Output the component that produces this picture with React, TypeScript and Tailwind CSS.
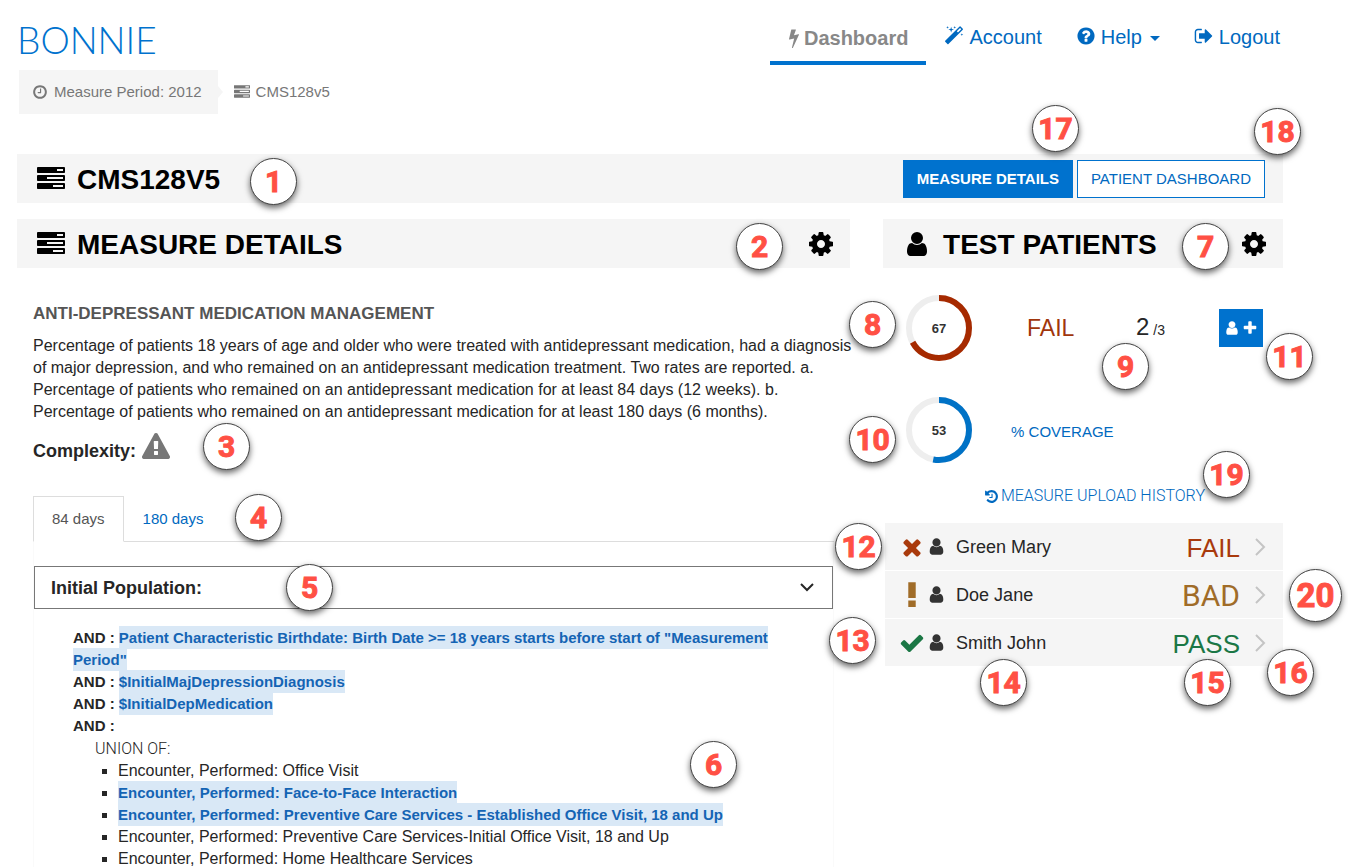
import React, { useState } from "react";

const paths = {
  tasks:
    "M1024 1408h640v-128h-640v128zm-384-512h1024v-128h-1024v128zm640-512h384v-128h-384v128zm512 832v256q0 26-19 45t-45 19h-1664q-26 0-45-19t-19-45v-256q0-26 19-45t45-19h1664q26 0 45 19t19 45zm0-512v256q0 26-19 45t-45 19h-1664q-26 0-45-19t-19-45v-256q0-26 19-45t45-19h1664q26 0 45 19t19 45zm0-512v256q0 26-19 45t-45 19h-1664q-26 0-45-19t-19-45v-256q0-26 19-45t45-19h1664q26 0 45 19t19 45z",
  cog: "M1152 896q0-106-75-181t-181-75-181 75-75 181 75 181 181 75 181-75 75-181zm512-109v222q0 12-8 23t-20 13l-185 28q-19 54-39 91 35 50 107 138 10 12 10 25t-9 23q-27 37-99 108t-94 71q-12 0-26-9l-138-108q-44 23-91 38-16 136-29 186-7 28-36 28h-222q-14 0-24.5-8.5t-11.5-21.5l-28-184q-49-16-90-37l-141 107q-10 9-25 9-14 0-25-11-126-114-165-168-7-10-7-23 0-12 8-23 15-21 51-66.5t54-70.5q-27-50-41-99l-183-27q-13-2-21-12.5t-8-23.5v-222q0-12 8-23t19-13l186-28q14-46 39-92-40-57-107-138-10-12-10-24 0-10 9-23 26-36 98.5-107.5t94.5-71.5q13 0 26 10l138 107q44-23 91-38 16-136 29-186 7-28 36-28h222q14 0 24.5 8.5t11.5 21.5l28 184q49 16 90 37l142-107q9-9 24-9 13 0 25 10 129 119 165 170 7 8 7 22 0 12-8 23-15 21-51 66.5t-54 70.5q26 50 41 98l183 28q13 2 21 12.5t8 23.5z",
  user: "M1536 1399q0 109-62.5 187t-150.5 78h-854q-88 0-150.5-78t-62.5-187q0-85 8.5-160.5t31.5-152 58.5-131 94-89 134.5-34.5q131 128 313 128t313-128q76 0 134.5 34.5t94 89 58.5 131 31.5 152 8.5 160.5zm-256-887q0 159-112.5 271.5t-271.5 112.5-271.5-112.5-112.5-271.5 112.5-271.5 271.5-112.5 271.5 112.5 112.5 271.5z",
  clock:
    "M1024 544v448q0 14-9 23t-23 9h-320q-14 0-23-9t-9-23v-64q0-14 9-23t23-9h224v-352q0-14 9-23t23-9h64q14 0 23 9t9 23zm416 352q0-148-73-273t-198-198-273-73-273 73-198 198-73 273 73 273 198 198 273 73 273-73 198-198 73-273zm224 0q0 209-103 385.5t-279.5 279.5-385.5 103-385.5-103-279.5-279.5-103-385.5 103-385.5 279.5-279.5 385.5-103 385.5 103 279.5 279.5 103 385.5z",
  bolt: "M1333 566q18 20 7 44l-540 1157q-13 25-42 25-4 0-14-2-17-5-25.5-19t-4.5-30l197-808-406 101q-4 1-12 1-18 0-31-11-18-15-13-39l201-825q4-14 16-23t28-9h328q19 0 32 12.5t13 29.5q0 8-5 18l-171 463 396-98q8-2 12-2 19 0 34 15z",
  magic:
    "M1254 581l293-293-107-107-293 293zm447-293q0 27-18 45l-1286 1286q-18 18-45 18t-45-18l-198-198q-18-18-18-45t18-45l1286-1286q18-18 45-18t45 18l198 198q18 18 18 45zm-1351-190l98 30-98 30-30 98-30-98-98-30 98-30 30-98zm350 162l196 60-196 60-60 196-60-196-196-60 196-60 60-196zm930 478l98 30-98 30-30 98-30-98-98-30 98-30 30-98zm-640-640l98 30-98 30-30 98-30-98-98-30 98-30 30-98z",
  question:
    "M1024 1376v-192q0-14-9-23t-23-9h-192q-14 0-23 9t-9 23v192q0 14 9 23t23 9h192q14 0 23-9t9-23zm256-672q0-88-55.5-163t-138.5-116-170-41q-243 0-371 213-15 24 8 42l132 100q7 6 19 6 16 0 25-12 53-68 86-92 34-24 86-24 48 0 85.5 26t37.5 59q0 38-20 61t-68 45q-63 28-115.5 86.5t-52.5 125.5v36q0 14 9 23t23 9h192q14 0 23-9t9-23q0-19 21.5-49.5t54.5-49.5q32-18 49-28.5t46-35 44.5-48 28-60.5 12.5-81zm384 192q0 209-103 385.5t-279.5 279.5-385.5 103-385.5-103-279.5-279.5-103-385.5 103-385.5 279.5-279.5 385.5-103 385.5 103 279.5 279.5 103 385.5z",
  signOut:
    "M704 1440q0 4 1 20t.5 26.5-3 23.5-10 19.5-20.5 6.5h-320q-119 0-203.5-84.5t-84.5-203.5v-704q0-119 84.5-203.5t203.5-84.5h320q13 0 22.5 9.5t9.5 22.5q0 4 1 20t.5 26.5-3 23.5-10 19.5-20.5 6.5h-320q-66 0-113 47t-47 113v704q0 66 47 113t113 47h312l11.5 1 11.5 3 8 5.5 7 9 2 13.5zm928-544q0 26-19 45l-544 544q-19 19-45 19t-45-19-19-45v-288h-448q-26 0-45-19t-19-45v-384q0-26 19-45t45-19h448v-288q0-26 19-45t45-19 45 19l544 544q19 19 19 45z",
  history:
    "M1664 896q0 156-61 298t-164 245-245 164-298 61q-172 0-327-72.5t-264-204.5q-7-10-6.5-22.5t8.5-20.5l137-138q10-9 25-9 16 2 23 12 73 95 179 147t225 52q104 0 198.5-40.5t163.5-109.5 109.5-163.5 40.5-198.5-40.5-198.5-109.5-163.5-163.5-109.5-198.5-40.5q-98 0-188 35.5t-160 101.5l137 138q31 30 14 69-17 40-59 40h-448q-26 0-45-19t-19-45v-448q0-42 40-59 39-17 69 14l130 129q107-101 244.5-156.5t284.5-55.5q156 0 298 61t245 164 164 245 61 298zm-640-288v448q0 14-9 23t-23 9h-320q-14 0-23-9t-9-23v-64q0-14 9-23t23-9h224v-352q0-14 9-23t23-9h64q14 0 23 9t9 23z",
  warning:
    "M1024 1375v-190q0-14-9.5-23.5t-22.5-9.5h-192q-13 0-22.5 9.5t-9.5 23.5v190q0 14 9.5 23.5t22.5 9.5h192q13 0 22.5-9.5t9.5-23.5zm-2-374l18-459q0-12-10-19-13-11-24-11h-220q-11 0-24 11-10 7-10 21l17 457q0 10 10 16.5t24 6.5h185q14 0 23.5-6.5t10.5-16.5zm-14-934l768 1408q35 63-2 126-17 29-46.5 46t-63.5 17h-1536q-34 0-63.5-17t-46.5-46q-37-63-2-126l768-1408q17-31 47-49t65-18 65 18 47 49z",
  times:
    "M1490 1322q0 40-28 68l-136 136q-28 28-68 28t-68-28l-294-294-294 294q-28 28-68 28t-68-28l-136-136q-28-28-28-68t28-68l294-294-294-294q-28-28-28-68t28-68l136-136q28-28 68-28t68 28l294 294 294-294q28-28 68-28t68 28l136 136q28 28 28 68t-28 68l-294 294 294 294q28 28 28 68z",
  check:
    "M1671 566q0 40-28 68l-724 724-136 136q-28 28-68 28t-68-28l-136-136-362-362q-28-28-28-68t28-68l136-136q28-28 68-28t68 28l294 295 656-657q28-28 68-28t68 28l136 136q28 28 28 68z",
  plus: "M1600 736v192q0 40-28 68t-68 28h-416v416q0 40-28 68t-68 28h-192q-40 0-68-28t-28-68v-416h-416q-40 0-68-28t-28-68v-192q0-40 28-68t68-28h416v-416q0-40 28-68t68-28h192q40 0 68 28t28 68v416h416q40 0 68 28t28 68z",
  bang: "M640 20h512v1080h-512zM640 1270h512v450h-512z",
};

type IconName = keyof typeof paths;

function Icon({ name, className }: { name: IconName; className: string }) {
  return (
    <svg viewBox="0 0 1792 1792" fill="currentColor" aria-hidden="true" className={`shrink-0 ${className}`}>
      <path d={paths[name]} />
    </svg>
  );
}

function Badge({ n, className, large = false }: { n: number; className: string; large?: boolean }) {
  return (
    <span
      className={`absolute z-10 flex items-center justify-center rounded-full border border-[#444] bg-white font-['Roboto',sans-serif] font-bold leading-none text-[#ff5044] shadow-[0_3px_6px_rgba(0,0,0,0.6)] [-webkit-text-stroke:1px_#ff5044] ${large ? "size-[53px] text-[33px]" : "size-[47px] text-[30px]"} ${className}`}
    >
      {n}
    </span>
  );
}

function Donut({ value, color }: { value: number; color: string }) {
  const r = 30;
  const c = 2 * Math.PI * r;
  return (
    <svg viewBox="0 0 66 66" className="size-[66px] shrink-0" role="img" aria-label={`${value} percent`}>
      <circle cx="33" cy="33" r={r} fill="none" stroke="#eeeeee" strokeWidth="6" />
      <circle
        cx="33"
        cy="33"
        r={r}
        fill="none"
        stroke={color}
        strokeWidth="6"
        strokeDasharray={`${(c * value) / 100} ${c}`}
        transform="rotate(-90 33 33)"
      />
      <text x="33" y="38" textAnchor="middle" fontSize="13" fontWeight="bold" fill="#333">
        {value}
      </text>
    </svg>
  );
}

function PanelTitle({ icon, title, children }: { icon: IconName; title: string; children?: React.ReactNode }) {
  return (
    <div className="relative flex h-[49px] items-center bg-[#f5f5f5] px-5 text-black">
      <Icon name={icon} className="mr-3 size-7" />
      <h2 className="pt-[2px] text-[28px] font-bold leading-none">{title}</h2>
      <button type="button" aria-label={`${title} settings`} className="ml-auto mr-[-5px]">
        <Icon name="cog" className="size-7" />
      </button>
      {children}
    </div>
  );
}

function Hit({ children }: { children: React.ReactNode }) {
  return <span className="bg-[#d9e8f6] py-[3px] font-bold text-[#1464b4]">{children}</span>;
}

const encounters = [
  { text: "Encounter, Performed: Office Visit", hit: false },
  { text: "Encounter, Performed: Face-to-Face Interaction", hit: true },
  { text: "Encounter, Performed: Preventive Care Services - Established Office Visit, 18 and Up", hit: true },
  { text: "Encounter, Performed: Preventive Care Services-Initial Office Visit, 18 and Up", hit: false },
  { text: "Encounter, Performed: Home Healthcare Services", hit: false },
];

const patients: { name: string; status: string; icon: IconName; color: string; font: string }[] = [
  { name: "Green Mary", status: "FAIL", icon: "times", color: "text-[#a93a0c]", font: "text-[26px]" },
  { name: "Doe Jane", status: "BAD", icon: "bang", color: "text-[#a06c28]", font: "text-[30px] font-['Roboto',sans-serif]" },
  { name: "Smith John", status: "PASS", icon: "check", color: "text-[#1b7745]", font: "text-[26px]" },
];

export default function App() {
  const [tab, setTab] = useState(0);
  const [open, setOpen] = useState(true);
  return (
    <div className="h-screen overflow-hidden bg-white pl-[17px] pr-[65px] font-['Liberation_Sans',Arial,sans-serif] text-[15px] leading-[22px] text-[#262626]">
      <header className="flex h-[70px] items-start justify-between">
        <a href="#home" className="pt-5 font-['Lato','Roboto',sans-serif] text-[37px] font-light leading-10 text-[#0072ce]">
          BONNIE
        </a>
        <nav className="flex items-start text-[20px] leading-6 text-[#0069c0]">
          <a href="#dashboard" className="flex h-[65px] items-start border-b-4 border-[#0072ce] pl-[14px] pr-[18px] pt-[26px] font-bold text-[#888]">
            <Icon name="bolt" className="mt-[2px] size-5" />
            Dashboard
          </a>
          <a href="#account" className="ml-[18px] flex gap-[5px] pt-[25px]">
            <Icon name="magic" className="mt-px size-5" />
            Account
          </a>
          <button type="button" className="ml-[34px] flex gap-[5px] pt-[25px]">
            <Icon name="question" className="mt-px size-5" />
            Help
            <span className="ml-[3px] mt-[11px] border-x-[5px] border-t-[5px] border-x-transparent border-t-current" />
          </button>
          <a href="#logout" className="ml-[34px] mr-[3px] flex gap-[5px] pt-[25px]">
            <Icon name="signOut" className="mt-px size-5" />
            Logout
          </a>
        </nav>
      </header>

      <ol className="flex h-11 items-center pl-[2px] text-[#777]">
        <li className="relative flex h-full items-center gap-[6px] bg-[#f5f5f5] pl-[13px] pr-4">
          <Icon name="clock" className="size-4" />
          <span>Measure Period: 2012</span>
          <span className="absolute -right-[5px] top-4 border-y-[6px] border-l-[5px] border-y-transparent border-l-[#f5f5f5]" />
        </li>
        <li className="flex items-center gap-[6px] pl-4">
          <Icon name="tasks" className="size-4" />
          <span>CMS128v5</span>
        </li>
      </ol>

      <div className="relative mt-10 flex h-[49px] items-center bg-[#f5f5f5] px-5 text-black">
        <Icon name="tasks" className="mr-3 size-7" />
        <h1 className="pt-[2px] text-[28px] font-bold leading-none">CMS128V5</h1>
        <div className="ml-auto mr-[-2px] flex gap-1">
          <button type="button" className="h-[38px] border border-[#0072ce] bg-[#0072ce] px-[13px] font-bold text-white">
            MEASURE DETAILS
          </button>
          <button type="button" className="h-[38px] border border-[#0072ce] bg-white px-[13px] text-[#0069c0]">
            PATIENT DASHBOARD
          </button>
        </div>
        <Badge n={1} className="left-[233px] top-1" />
        <Badge n={17} className="-top-[49px] right-[204px]" />
        <Badge n={18} className="-right-[18px] -top-[46px]" />
      </div>

      <div className="mt-4 grid grid-cols-[minmax(0,25fr)_minmax(0,12fr)] gap-[33px]">
        <main>
          <PanelTitle icon="tasks" title="MEASURE DETAILS">
            <Badge n={2} className="right-[67px] top-1" />
          </PanelTitle>

          <div className="relative px-4 pt-[35px]">
            <h3 className="text-[17px] font-bold text-[#555]">ANTI-DEPRESSANT MEDICATION MANAGEMENT</h3>
            <p className="mt-[10px] whitespace-nowrap text-[16px] leading-[22px]">
              Percentage of patients 18 years of age and older who were treated with antidepressant medication, had a diagnosis
              <br />
              of major depression, and who remained on an antidepressant medication treatment. Two rates are reported. a.
              <br />
              Percentage of patients who remained on an antidepressant medication for at least 84 days (12 weeks). b.
              <br />
              Percentage of patients who remained on an antidepressant medication for at least 180 days (6 months).
            </p>
            <div className="mt-2 flex h-8 items-center gap-[6px] text-[18px] font-bold">
              <span className="pt-2">Complexity:</span>
              <Icon name="warning" className="size-7 text-[#777]" />
            </div>

            <div role="tablist" className="mt-[33px] flex h-[46px] border-b border-[#ddd]">
              {["84 days", "180 days"].map((label, i) => (
                <button
                  key={label}
                  type="button"
                  role="tab"
                  aria-selected={tab === i}
                  onClick={() => setTab(i)}
                  className={
                    tab === i
                      ? "-mb-px border border-[#ddd] border-b-white bg-white px-[18px] text-[#555]"
                      : "border border-transparent px-[18px] text-[#0069c0]"
                  }
                >
                  {label}
                </button>
              ))}
            </div>

            <div className="border-x border-[#fafafa] pt-6">
              <button
                type="button"
                aria-expanded={open}
                onClick={() => setOpen(!open)}
                className="flex h-[43px] w-full items-center justify-between border border-[#777] px-4 text-[18px] font-bold"
              >
                Initial Population:
                <svg viewBox="0 0 14 9" className="mr-[2px] h-[9px] w-[14px]" fill="none" stroke="#262626" strokeWidth="2">
                  <path d="M1 1l6 6 6-6" />
                </svg>
              </button>
              {open && (
                <div className="pl-[39px] pt-[18px]">
                  <div>
                    <b>AND : </b>
                    <Hit>
                      Patient Characteristic Birthdate: Birth Date &gt;= 18 years starts before start of "Measurement
                      <br />
                      Period"
                    </Hit>
                  </div>
                  <div>
                    <b>AND : </b>
                    <Hit>$InitialMajDepressionDiagnosis</Hit>
                  </div>
                  <div>
                    <b>AND : </b>
                    <Hit>$InitialDepMedication</Hit>
                  </div>
                  <div>
                    <b>AND :</b>
                  </div>
                  <div className="pl-[22px] pt-px font-['Roboto',sans-serif] text-[16px] font-light leading-[22px]">UNION OF:</div>
                  <ul className="pl-[29px]">
                    {encounters.map((e) => (
                      <li key={e.text} className="flex h-[22px] items-center whitespace-nowrap">
                        <span className="mr-[11px] size-[5px] shrink-0 bg-[#262626]" />
                        <div>{e.hit ? <Hit>{e.text}</Hit> : <span className="text-[16px] leading-[22px]">{e.text}</span>}</div>
                      </li>
                    ))}
                  </ul>
                </div>
              )}
            </div>

            <Badge n={3} className="left-[186px] top-[155px]" />
            <Badge n={4} className="left-[218px] top-[226px]" />
            <Badge n={5} className="left-[269px] top-[296px]" />
            <Badge n={6} className="right-[113px] top-[473px]" />
          </div>
        </main>

        <aside>
          <PanelTitle icon="user" title="TEST PATIENTS">
            <Badge n={7} className="right-[54px] top-1" />
          </PanelTitle>

          <div className="relative pl-[23px] pr-5 pt-[27px]">
            <div className="flex items-center">
              <Donut value={67} color="#a62a00" />
              <span className="ml-[55px] text-[23px] text-[#a0360c]">FAIL</span>
              <span className="ml-auto mr-[54px] flex items-baseline gap-1 text-[24px]">
                2 <small className="text-[14px]">/3</small>
              </span>
              <button
                type="button"
                aria-label="Add patient"
                className="flex h-[38px] w-11 items-center justify-center gap-[2px] bg-[#0072ce] text-white"
              >
                <Icon name="user" className="size-4" />
                <Icon name="plus" className="size-4" />
              </button>
            </div>
            <div className="mt-9 flex items-center">
              <Donut value={53} color="#0072c6" />
              <a href="#coverage" className="ml-[39px] pt-1 text-[#0069c0]">% COVERAGE</a>
            </div>
            <div className="mt-[22px] flex justify-end pr-[58px]">
              <a href="#history" className="flex items-center gap-[2px] font-['Roboto',sans-serif] text-[16px] font-light leading-[22px] text-[#0069c0]">
                <Icon name="history" className="size-[15px]" />
                MEASURE UPLOAD HISTORY
              </a>
            </div>
            <Badge n={8} className="-left-[34px] top-[33px]" />
            <Badge n={9} className="right-[134px] top-[75px]" />
            <Badge n={10} className="-left-[34px] top-[148px]" />
            <Badge n={11} className="-right-[30px] top-[65px]" />
            <Badge n={19} className="right-[33px] top-[183px]" />
          </div>

          <div className="relative ml-[2px] mt-4">
            <ul className="flex flex-col gap-px">
              {patients.map((p) => (
                <li key={p.name}>
                  <a href={`#${p.status}`} className="flex h-[47px] items-center bg-[#f5f5f5] pl-[14px] pr-[17px]">
                    <Icon name={p.icon} className={`size-[26px] ${p.color}`} />
                    <Icon name="user" className="ml-[2px] size-[19px] text-[#333]" />
                    <span className="ml-[10px] text-[18px]">{p.name}</span>
                    <span className={`ml-auto pt-[2px] ${p.font} ${p.color}`}>{p.status}</span>
                    <svg viewBox="0 0 12 18" className="ml-[14px] h-[18px] w-3" fill="none" stroke="#c4c4c4" strokeWidth="2">
                      <path d="M2 1l8 8-8 8" />
                    </svg>
                  </a>
                </li>
              ))}
            </ul>
            <Badge n={12} className="-left-[50px] top-0" />
            <Badge n={13} className="-left-[56px] top-[94px]" />
            <Badge n={14} className="left-[95px] top-[136px]" />
            <Badge n={15} className="right-[52px] top-[136px]" />
            <Badge n={16} className="-right-[31px] top-[126px]" />
            <Badge n={20} large className="-right-[59px] top-[46px]" />
          </div>
        </aside>
      </div>
    </div>
  );
}
